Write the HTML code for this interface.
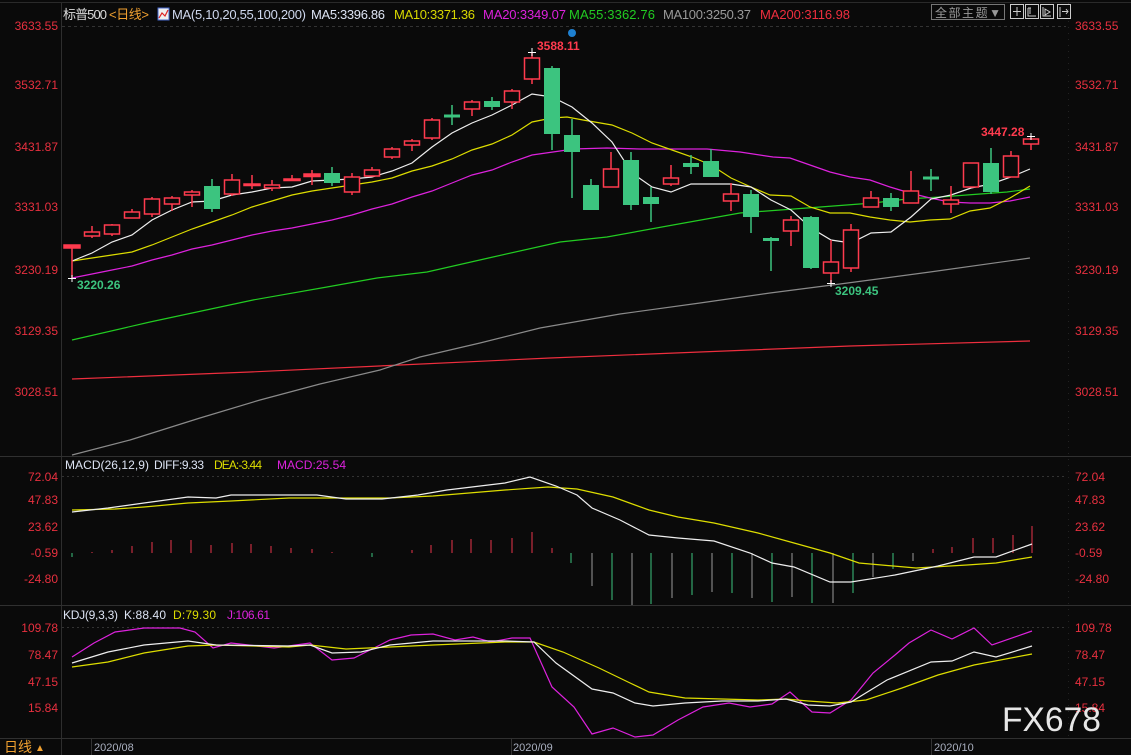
<!DOCTYPE html>
<html><head><meta charset="utf-8"><style>
html,body{margin:0;padding:0;background:#0a0a0a;}
svg{display:block;font-family:"Liberation Sans","Noto Sans CJK SC",sans-serif;}
</style></head><body>
<svg width="1131" height="755" viewBox="0 0 1131 755" xmlns="http://www.w3.org/2000/svg">
<rect width="1131" height="755" fill="#0a0a0a"/>
<line x1="0" y1="2.5" x2="1131" y2="2.5" stroke="#2a2a2a"/>
<line x1="61.5" y1="3" x2="61.5" y2="755" stroke="#2e2e2e"/>
<line x1="1068.5" y1="3" x2="1068.5" y2="738" stroke="#222" stroke-dasharray="1,5"/>
<line x1="0" y1="456.5" x2="1131" y2="456.5" stroke="#303030"/>
<line x1="0" y1="605.5" x2="1131" y2="605.5" stroke="#303030"/>
<line x1="0" y1="738.5" x2="1131" y2="738.5" stroke="#303030"/>
<line x1="62" y1="26.5" x2="1066" y2="26.5" stroke="#333" stroke-dasharray="3,3"/>
<line x1="62" y1="476.5" x2="1066" y2="476.5" stroke="#333" stroke-dasharray="2,3"/>
<line x1="62" y1="627.5" x2="1066" y2="627.5" stroke="#333" stroke-dasharray="2,3"/>

<g font-size="13">
<text x="63" y="19" fill="#dcdcdc" textLength="44">标普500</text>
<text x="109" y="19" fill="#f0a030" textLength="40">&lt;日线&gt;</text>
<rect x="158" y="8" width="11" height="12" fill="#eee" stroke="#46c"/>
<polyline points="159,18 162,13 165,16 168,10" fill="none" stroke="#d22" stroke-width="1.2"/>
<text x="172" y="19" fill="#cfd8ee" textLength="134">MA(5,10,20,55,100,200)</text>
<text x="311" y="19" fill="#dde4f4" textLength="74">MA5:3396.86</text>
<text x="394" y="19" fill="#d8d800" textLength="81">MA10:3371.36</text>
<text x="483" y="19" fill="#dd22dd" textLength="83">MA20:3349.07</text>
<text x="569" y="19" fill="#22cc22" textLength="86">MA55:3362.76</text>
<text x="663" y="19" fill="#9a9a9a" textLength="88">MA100:3250.37</text>
<text x="760" y="19" fill="#ee2e3e" textLength="90">MA200:3116.98</text>
</g>
<rect x="931.5" y="4.5" width="73" height="15" fill="none" stroke="#777"/>
<text x="935" y="17" font-size="12" fill="#999" textLength="66">全部主题▼</text>
<g fill="none" stroke="#ccc">
<rect x="1010.5" y="4.5" width="13" height="14"/>
<rect x="1025.5" y="4.5" width="13" height="14"/>
<rect x="1040.5" y="4.5" width="13" height="14"/>
<rect x="1057.5" y="4.5" width="13" height="14"/>
<path d="M1017 7v9M1013 11.5h8M1028 8v8h8M1030 8v6M1028 8h3M1043 7v9h8M1045 9l5 3-5 3zM1060 7v10M1062 11.5h6M1066 9l2 2.5-2 2.5"/>
</g>

<g font-size="12" fill="#e8303f">
<g text-anchor="end">
<text x="58" y="30">3633.55</text><text x="58" y="89">3532.71</text><text x="58" y="151">3431.87</text>
<text x="58" y="211">3331.03</text><text x="58" y="274">3230.19</text><text x="58" y="335">3129.35</text>
<text x="58" y="396">3028.51</text>
<text x="58" y="481">72.04</text><text x="58" y="504">47.83</text><text x="58" y="531">23.62</text>
<text x="58" y="557">-0.59</text><text x="58" y="583">-24.80</text>
<text x="58" y="632">109.78</text><text x="58" y="659">78.47</text><text x="58" y="686">47.15</text><text x="58" y="712">15.84</text>
</g>
<text x="1075" y="30">3633.55</text><text x="1075" y="89">3532.71</text><text x="1075" y="151">3431.87</text>
<text x="1075" y="211">3331.03</text><text x="1075" y="274">3230.19</text><text x="1075" y="335">3129.35</text>
<text x="1075" y="396">3028.51</text>
<text x="1075" y="481">72.04</text><text x="1075" y="504">47.83</text><text x="1075" y="531">23.62</text>
<text x="1075" y="557">-0.59</text><text x="1075" y="583">-24.80</text>
<text x="1075" y="632">109.78</text><text x="1075" y="659">78.47</text><text x="1075" y="686">47.15</text><text x="1075" y="712">15.84</text>
</g>

<g fill="none" stroke-width="1.2">
<polyline stroke="#ee2e3e" points="72,379 250,372 400,365 550,358 700,352 850,346 1030,341"/>
<polyline stroke="#8a8a8a" points="72,455 130,440 200,418 260,400 320,384 380,370 420,357 480,343 540,328 620,314 700,303 770,293 840,284 930,272 1030,258"/>
<polyline stroke="#22cc22" points="72,340 150,322 253,300 327,287 377,278 427,272 493,257 560,242 607,237 673,225 740,213 807,208 873,203 907,199 940,197 1007,192 1030,189"/>
<polyline stroke="#dd22dd" points="72,278 112,270 132,266 152,260 172,255 192,249 212,245 232,240 252,235 272,231 292,228 312,224 332,220 352,215 372,209 392,204 412,197 432,191 452,183 472,175 492,170 512,162 532,155 560,151 573,149 607,148 640,149 707,149 740,152 773,157 790,158 810,165 830,172 850,177 870,180 890,187 910,193 930,198 950,202 970,203 990,203 1010,201 1030,197"/>
<polyline stroke="#dddd00" points="72,261 92,258 112,255 132,252 152,245 172,237 192,229 212,222 232,215 252,207 272,201 292,195 312,191 332,188 352,185 372,182 392,178 412,171 432,166 452,159 472,150 492,144 512,135 532,122 552,118 567,117 583,120 612,125 632,133 652,143 672,150 692,157 711,165 731,178 751,187 770,195 791,196 810,207 830,213 850,213 870,217 890,220 910,222 930,220 950,219 970,211 990,208 1010,198 1030,186"/>
<polyline stroke="#eeeeee" points="72,261 92,253 112,242 132,235 152,220 172,210 192,202 212,201 232,195 252,192 272,188 292,187 312,181 332,180 352,179 372,177 392,171 412,163 432,147 452,133 472,123 492,115 512,105 532,94 552,97 572,107 592,123 612,142 632,173 652,187 671,192 691,184 711,184 731,184 751,187 771,200 791,210 811,228 831,240 851,243 871,233 891,232 911,217 931,199 951,195 971,188 991,184 1011,177 1030,169"/>
</g>

<g stroke-width="1.5">
<g stroke="#ff3b4e" fill="#0a0a0a">
<line x1="72" y1="246" x2="72" y2="278"/><rect x="64" y="245" width="16" height="3" fill="#ff3b4e"/>
<line x1="92" y1="226" x2="92" y2="238"/><rect x="84.5" y="232" width="15" height="4"/>
<line x1="112" y1="224" x2="112" y2="236"/><rect x="104.5" y="225" width="15" height="9"/>
<line x1="132" y1="209" x2="132" y2="218"/><rect x="124.5" y="212" width="15" height="6"/>
<line x1="152" y1="197" x2="152" y2="217"/><rect x="144.5" y="199" width="15" height="15"/>
<line x1="172" y1="196" x2="172" y2="211"/><rect x="164.5" y="198" width="15" height="6"/>
<line x1="192" y1="190" x2="192" y2="207"/><rect x="184.5" y="192" width="15" height="3"/>
<line x1="232" y1="174" x2="232" y2="196"/><rect x="224.5" y="180" width="15" height="14"/>
<line x1="252" y1="175" x2="252" y2="189"/><rect x="244" y="184" width="16" height="1.5" fill="#ff3b4e"/>
<line x1="272" y1="180" x2="272" y2="191"/><rect x="264.5" y="185" width="15" height="3"/>
<line x1="292" y1="175" x2="292" y2="180"/><rect x="284" y="179" width="16" height="1.5" fill="#ff3b4e"/>
<line x1="312" y1="170" x2="312" y2="185"/><rect x="304" y="174" width="16" height="2.5" fill="#ff3b4e"/>
<line x1="352" y1="173" x2="352" y2="195"/><rect x="344.5" y="177" width="15" height="15"/>
<line x1="372" y1="167" x2="372" y2="176"/><rect x="364.5" y="170" width="15" height="6"/>
<line x1="392" y1="147" x2="392" y2="159"/><rect x="384.5" y="149" width="15" height="8"/>
<line x1="412" y1="139" x2="412" y2="151"/><rect x="404.5" y="141" width="15" height="4"/>
<line x1="432" y1="118" x2="432" y2="140"/><rect x="424.5" y="120" width="15" height="18"/>
<line x1="472" y1="100" x2="472" y2="116"/><rect x="464.5" y="102" width="15" height="7"/>
<line x1="512" y1="89" x2="512" y2="109"/><rect x="504.5" y="91" width="15" height="11"/>
<line x1="532" y1="52" x2="532" y2="84"/><rect x="524.5" y="58" width="15" height="21"/>
<line x1="611" y1="152" x2="611" y2="187"/><rect x="603.5" y="169" width="15" height="18"/>
<line x1="671" y1="165" x2="671" y2="186"/><rect x="663.5" y="178" width="15" height="6"/>
<line x1="731" y1="183" x2="731" y2="211"/><rect x="723.5" y="194" width="15" height="7"/>
<line x1="791" y1="216" x2="791" y2="246"/><rect x="783.5" y="220" width="15" height="11"/>
<line x1="831" y1="240" x2="831" y2="283"/><rect x="823.5" y="262" width="15" height="11"/>
<line x1="851" y1="224" x2="851" y2="272"/><rect x="843.5" y="230" width="15" height="38"/>
<line x1="871" y1="191" x2="871" y2="207"/><rect x="863.5" y="198" width="15" height="9"/>
<line x1="911" y1="171" x2="911" y2="203"/><rect x="903.5" y="191" width="15" height="12"/>
<line x1="951" y1="186" x2="951" y2="213"/><rect x="943.5" y="200" width="15" height="4"/>
<line x1="971" y1="163" x2="971" y2="187"/><rect x="963.5" y="163" width="15" height="24"/>
<line x1="1011" y1="151" x2="1011" y2="177"/><rect x="1003.5" y="156" width="15" height="21"/>
<line x1="1031" y1="137" x2="1031" y2="150"/><rect x="1023.5" y="139" width="15" height="5"/>
</g>
<g stroke="#3cc47f" fill="#3cc47f">
<line x1="212" y1="179" x2="212" y2="212"/><rect x="204" y="186" width="16" height="23" stroke="none"/>
<line x1="332" y1="167" x2="332" y2="186"/><rect x="324" y="173" width="16" height="10" stroke="none"/>
<line x1="452" y1="105" x2="452" y2="125"/><rect x="444" y="114.5" width="16" height="3" stroke="none"/>
<line x1="492" y1="97" x2="492" y2="110"/><rect x="484" y="101" width="16" height="6" stroke="none"/>
<line x1="552" y1="66" x2="552" y2="150"/><rect x="544" y="68" width="16" height="66" stroke="none"/>
<line x1="572" y1="119" x2="572" y2="198"/><rect x="564" y="135" width="16" height="17" stroke="none"/>
<line x1="591" y1="179" x2="591" y2="210"/><rect x="583" y="185" width="16" height="25" stroke="none"/>
<line x1="631" y1="152" x2="631" y2="210"/><rect x="623" y="160" width="16" height="45" stroke="none"/>
<line x1="651" y1="187" x2="651" y2="222"/><rect x="643" y="197" width="16" height="7" stroke="none"/>
<line x1="691" y1="155" x2="691" y2="174"/><rect x="683" y="163" width="16" height="4" stroke="none"/>
<line x1="711" y1="149" x2="711" y2="177"/><rect x="703" y="161" width="16" height="16" stroke="none"/>
<line x1="751" y1="190" x2="751" y2="233"/><rect x="743" y="194" width="16" height="23" stroke="none"/>
<line x1="771" y1="237" x2="771" y2="271"/><rect x="763" y="238" width="16" height="3" stroke="none"/>
<line x1="811" y1="216" x2="811" y2="269"/><rect x="803" y="217" width="16" height="51" stroke="none"/>
<line x1="891" y1="193" x2="891" y2="211"/><rect x="883" y="198" width="16" height="9" stroke="none"/>
<line x1="931" y1="169" x2="931" y2="191"/><rect x="923" y="176.5" width="16" height="3" stroke="none"/>
<line x1="991" y1="148" x2="991" y2="194"/><rect x="983" y="163" width="16" height="29" stroke="none"/>
</g>
</g>
<g stroke="#fff" stroke-width="1">
<path d="M528 52.5h8M532 48v8M68 278.5h8M72 275v7M827 283.5h8M831 280v7M1027 136.5h8M1031 133v7"/>
</g>
<circle cx="572" cy="33" r="4" fill="#1e80d0"/>
<g font-size="12" font-weight="bold">
<text x="537" y="50" fill="#ff3b4e">3588.11</text>
<text x="981" y="136" fill="#ff3b4e">3447.28</text>
<text x="77" y="289" fill="#3cc47f">3220.26</text>
<text x="835" y="295" fill="#3cc47f">3209.45</text>
</g>

<g font-size="12">
<text x="65" y="469" fill="#dde4f4" textLength="84">MACD(26,12,9)</text>
<text x="154" y="469" fill="#dde4f4" textLength="50">DIFF:9.33</text>
<text x="214" y="469" fill="#dddd00" textLength="48">DEA:-3.44</text>
<text x="277" y="469" fill="#dd22dd" textLength="69">MACD:25.54</text>
</g>
<g stroke-width="1">
<path stroke="#e8344a" d="M92 553V552M112 553V550M132 553V546M152 553V542M171 553V540M191 553V540M211 553V545M232 553V543M251 553V544M271 553V546M291 553V548M312 553V549M332 553V552M392 553V553M412 553V550M431 553V545M452 553V540M471 553V539M491 553V540M512 553V538M532 553V532M552 553V548M933 553V549M952 553V547M973 553V538M993 553V538M1013 553V535M1032 553V526"/>
<path stroke="#3cc47f" d="M72 553V557M372 553V557M571 553V563M612 553V600M651 553V604M692 553V595M732 553V593M772 553V602M812 553V603M853 553V593M893 553V569"/>
<path stroke="#9a9a9a" d="M592 553V586M632 553V605M672 553V598M712 553V592M752 553V598M792 553V597M833 553V603M873 553V577M913 553V561"/>
</g>
<g fill="none" stroke-width="1.2">
<polyline stroke="#dddd00" points="72,510 115,509 144,507 188,503 231,501 289,498 346,498 390,498 433,496 505,490 548,487 577,489 613,497 649,510 678,517 714,523 758,533 794,543 830,553 859,563 916,568 967,565 996,563 1032,557"/>
<polyline stroke="#eeeeee" points="72,512 108,508 144,503 188,497 216,498 231,495 317,495 346,499 382,499 418,495 447,490 505,483 530,477 556,486 577,495 592,508 620,520 649,535 678,538 714,541 750,553 772,563 794,567 830,582 851,582 895,575 938,566 974,557 996,557 1032,544"/>
</g>

<g font-size="12">
<text x="63" y="619" fill="#dde4f4" textLength="55">KDJ(9,3,3)</text>
<text x="124" y="619" fill="#dde4f4" textLength="42">K:88.40</text>
<text x="173" y="619" fill="#dddd00" textLength="43">D:79.30</text>
<text x="227" y="619" fill="#dd22dd" textLength="43">J:106.61</text>
</g>
<g fill="none" stroke-width="1.2">
<polyline stroke="#dd22dd" points="72,657 94,643 115,632 144,628 180,628 195,632 213,648 231,643 274,648 310,643 332,660 354,658 390,640 411,635 433,634 455,640 473,637 491,642 512,638 530,638 552,687 574,707 592,734 613,728 635,737 653,735 678,720 703,707 729,703 750,707 772,704 790,692 812,712 830,713 851,700 873,673 895,655 909,643 931,630 952,639 974,628 992,645 1032,631"/>
<polyline stroke="#dddd00" points="72,667 108,662 144,653 188,646 216,645 289,647 310,645 346,649 390,647 433,645 505,642 534,642 563,652 599,668 628,682 649,692 685,698 722,699 758,700 786,699 808,701 837,703 866,700 902,688 938,675 974,665 1032,654"/>
<polyline stroke="#eeeeee" points="72,663 108,652 144,645 188,641 202,643 216,645 289,646 310,645 332,653 361,652 390,645 433,641 469,641 505,641 534,642 556,663 592,689 613,693 635,703 653,706 685,703 722,701 758,701 786,699 808,705 830,706 851,702 887,680 931,662 952,661 974,652 996,657 1032,646"/>
</g>
<text x="1002" y="731" font-size="34" fill="#e6e6e6" textLength="99" lengthAdjust="spacingAndGlyphs">FX678</text>

<text x="4" y="752" font-size="14" fill="#f0a030">日线</text>
<text x="35" y="751" font-size="10" fill="#f0a030">▲</text>
<line x1="91.5" y1="739" x2="91.5" y2="755" stroke="#333"/>
<line x1="511.5" y1="739" x2="511.5" y2="755" stroke="#333"/>
<line x1="931.5" y1="739" x2="931.5" y2="755" stroke="#333"/>
<g font-size="11" fill="#aab0c0">
<text x="94" y="751">2020/08</text>
<text x="513" y="751">2020/09</text>
<text x="934" y="751">2020/10</text>
</g>
</svg>
</body></html>
